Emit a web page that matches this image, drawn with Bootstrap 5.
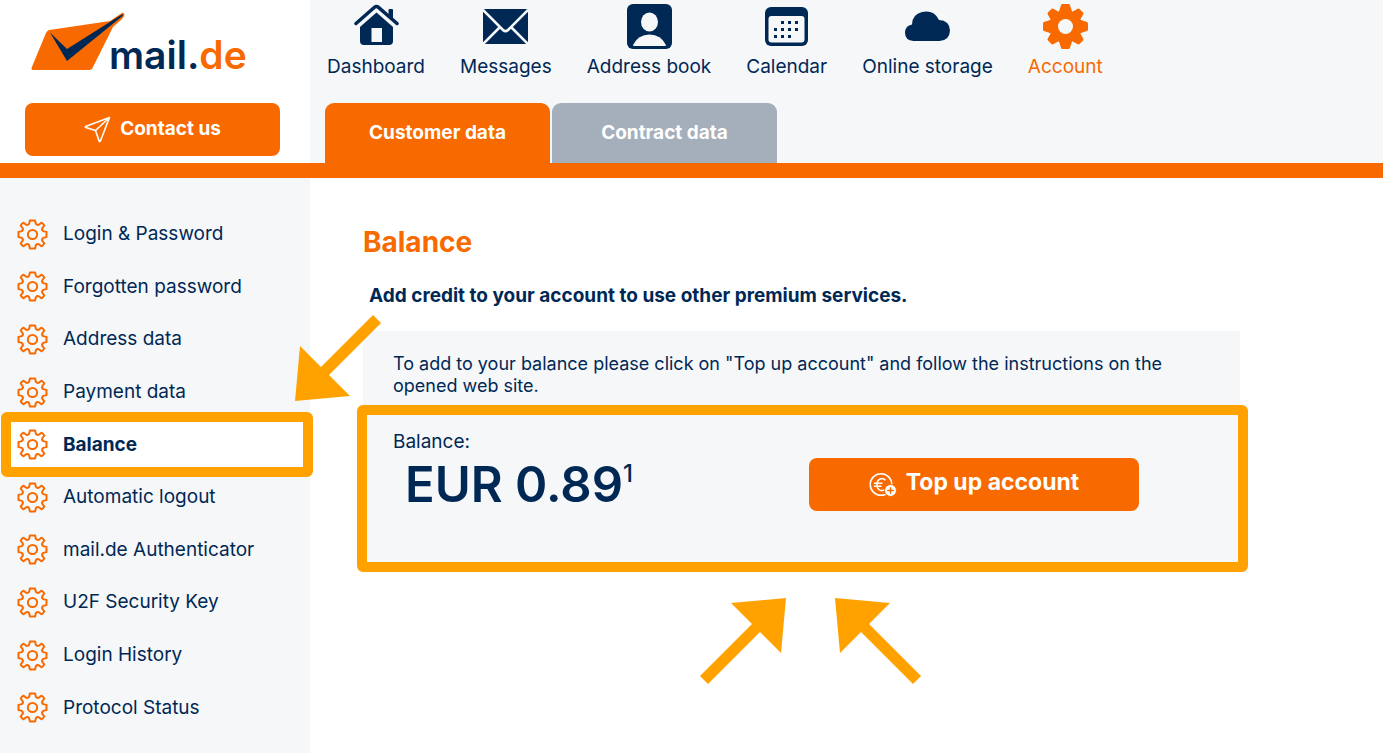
<!DOCTYPE html>
<html lang="en">
<head>
<meta charset="utf-8">
<meta name="viewport" content="width=device-width, initial-scale=1">
<title>mail.de – Balance</title>
<link href="https://cdn.jsdelivr.net/npm/bootstrap@5.3.0/dist/css/bootstrap.min.css" rel="stylesheet">
<style>
  :root { --navy: #002855; --brand: #f86a00; --pale: #f6f7f9; --mark: #ffa200; }
  body { font-family: Inter, "Open Sans", sans-serif; color: var(--navy); font-size: 19px; line-height: 24px; min-height: 100vh; }
  a { color: inherit; text-decoration: none; }
  .side-col { width: 310px; flex: none; }
  .pale { background: var(--pale); }
  .top-band { border-bottom: 15px solid var(--brand); }
  .brand-link { padding: 12px 0 0 31px; height: 103px; }
  .brand-word { font-size: 39px; line-height: 48px; font-weight: 600; margin: 19px 0 0 -16px; }
  .brand-word span, .text-brand { color: var(--brand); }
  .btn-brand { --bs-btn-color: #fff; --bs-btn-bg: var(--brand); --bs-btn-hover-bg: #e06000; --bs-btn-hover-color: #fff; --bs-btn-border-width: 0px; --bs-btn-border-radius: 8px; --bs-btn-font-weight: 700; height: 53px; }
  .contact-btn { width: 255px; margin: 0 0 7px 25px; --bs-btn-font-size: 19px; gap: 9px; }
  .app-nav { gap: 35px; padding: 4px 0 0 17px; height: 103px; }
  .app-nav svg { width: 45px; height: 45px; }
  .app-nav a { gap: 6px; }
  .tab-row { gap: 2px; padding-left: 15px; }
  .tab-link { width: 225px; height: 60px; border-radius: 9px 9px 0 0; background: #a5afbb; color: #fff; font-weight: 700; }
  .tab-link.active { background: var(--brand); }
  .side-list { height: 526px; margin-top: 30px; }
  .side-list a { padding-left: 17px; gap: 15px; }
  .side-list svg { width: 31px; height: 31px; }
  .marked { background: #fff; font-weight: 700; }
  .marked::after { content: ""; position: absolute; inset: -6px -3px -6px 1px; border: 10px solid var(--mark); border-radius: 6px; }
  .page-main { padding: 46px 24px 0 53px; }
  .page-main h1 { font-size: 28px; line-height: 36px; font-weight: 700; }
  .intro { font-weight: 700; padding: 24px 0 23px 6px; }
  .panel { max-width: 877px; }
  .panel-text { font-size: 18px; line-height: 22px; padding: 22px 30px 8px; }
  .balance-box { border: 10px solid var(--mark); border-radius: 6px; margin: 0 -8px 0 -6px; padding: 15px 99px 37px 26px; min-height: 167px; }
  .amount { font-size: 49px; line-height: 62px; font-weight: 600; padding-left: 12px; }
  .amount sup { font-size: 24px; font-weight: 500; top: -20px; line-height: 0; vertical-align: baseline; }
  .topup-btn { width: 330px; --bs-btn-font-size: 23px; gap: 9px; margin-top: 28px; padding-bottom: 10px; }
  .topup-btn svg { margin-top: 4px; }
  .arrow { width: 86px; height: 86px; fill: var(--mark); }
  .side-arrow { left: -15px; top: 137px; transform: scaleY(-1); }
  .flip { transform: scaleX(-1); }
  .arrow-row { gap: 49px; padding: 26px 0 0 18px; }
</style>
</head>
<body class="d-flex flex-column">
<svg class="d-none" aria-hidden="true">
  <symbol id="cog" viewBox="-15.500 -15.500 31 31">
    <path d="M-2.600-14H2.600L3.400-10.600Q5-8.700 7-10.300L8.900-11.800Q11-10.800 11.800-8.900L10.300-7Q8.700-5 10.600-3.400L14-2.600V2.600L10.600 3.400Q8.700 5 10.300 7L11.800 8.900Q10.800 11 8.900 11.800L7 10.300Q5 8.700 3.400 10.600L2.600 14H-2.600L-3.400 10.600Q-5 8.700-7 10.300L-8.900 11.800Q-11 10.800-11.800 8.900L-10.300 7Q-8.700 5-10.600 3.400L-14 2.600V-2.600L-10.600-3.400Q-8.700-5-10.300-7L-11.800-8.900Q-10.800-11-8.900-11.800L-7-10.300Q-5-8.700-3.400-10.600Z" fill="none" stroke="#f86a00" stroke-width="2" stroke-linejoin="round"/>
    <circle r="4.600" fill="none" stroke="#f86a00" stroke-width="2"/>
  </symbol>
  <symbol id="arrow" viewBox="0 0 86 86"><path d="M0 0L55 5L34 26L86 78L78 86L26 34L5 55Z"/></symbol>
</svg>

<header class="d-flex top-band">
  <div class="side-col">
    <a href="#" class="brand-link d-flex align-items-start" aria-label="mail.de">
      <svg width="94" height="60" viewBox="0 0 94 60">
        <path d="M17 18.500Q18 18 20 17.800L79 9L90 1.500Q93-.5 93.500 3Q93 5 91 7L82 15L62 55Q61 58 58 58H2Q0 58 .7 55.500L15 21Q16 19 17 18.500Z" fill="#f86a00"/>
        <path d="M19 20.500L36 37L90 3Q93 1 91.500 4L36 49Z" fill="#002855"/>
      </svg>
      <div class="brand-word">mail.<span>de</span></div>
    </a>
    <button type="button" class="btn btn-brand contact-btn d-flex align-items-center justify-content-center">
      <svg width="27" height="27" viewBox="0 0 27 27" fill="none" stroke="#fff" stroke-width="1.600" stroke-linejoin="round"><path d="M25.500 1.500L1.500 10.500Q1 11.200 1.800 11.600L11.500 14.500L15.200 25.300Q15.800 26 16.300 25.200ZM11.500 14.500L25.500 1.500"/></svg>
      Contact us
    </button>
  </div>
  <div class="flex-fill pale">
    <nav class="app-nav d-flex align-items-start" aria-label="Applications">
      <a href="#" class="d-flex flex-column align-items-center">
        <svg viewBox="0 0 45 45" fill="#002855"><path d="M22.500 8.500L39 23V37Q39 41 35 41H10Q6 41 6 37V23Z"/><path d="M2 20L20.500 4Q22.500 2.300 24.500 4L43 20" fill="none" stroke="#f6f7f9" stroke-width="7"/><path d="M2 19.500L20.500 3.300Q22.500 1.600 24.500 3.300L43 19.500" fill="none" stroke="#002855" stroke-width="3.500" stroke-linecap="round"/><path d="M34.500 12V6Q34.500 5 35.500 5H38Q39 5 39 6V15Z"/><path d="M17.500 24H28V38H17.500Z" fill="#f6f7f9"/></svg>
        Dashboard</a>
      <a href="#" class="d-flex flex-column align-items-center">
        <svg viewBox="0 0 45 45"><rect y="5" width="45" height="35" rx="2" fill="#002855"/><path d="M0 6L20 26Q22.500 28.300 25 26L45 6M0 40L17 23M45 40L28 23" fill="none" stroke="#f6f7f9" stroke-width="2.500"/></svg>
        Messages</a>
      <a href="#" class="d-flex flex-column align-items-center">
        <svg viewBox="0 0 45 45"><rect width="45" height="45" rx="6" fill="#002855"/><ellipse cx="22.500" cy="18" rx="8.500" ry="9.500" fill="#f6f7f9"/><path d="M6 41Q11 30.500 22.500 30.500Q34 30.500 39 41Q39 42 38 42H7Q6 42 6 41Z" fill="#f6f7f9"/></svg>
        Address book</a>
      <a href="#" class="d-flex flex-column align-items-center">
        <svg viewBox="0 0 45 45"><rect x="1" y="3" width="43" height="39" rx="6" fill="#002855"/><rect x="4.500" y="12" width="36" height="26.500" rx="3" fill="#f6f7f9"/><path d="M17 18.500h3m4 0h3m4 0h3M10 25.500h3m4 0h3m4 0h3m4 0h3M10 32.500h3m4 0h3m4 0h3" stroke="#002855" stroke-width="3" fill="none"/></svg>
        Calendar</a>
      <a href="#" class="d-flex flex-column align-items-center">
        <svg viewBox="0 0 45 45"><path d="M8.500 37Q0 36.500 0 28.800Q.3 21.500 7 20.500Q7 10.500 17 8Q29 5.500 34 16Q44.500 16.500 45 26.500Q44.500 36.500 34.500 37Z" fill="#002855"/></svg>
        Online storage</a>
      <a href="#" class="d-flex flex-column align-items-center text-brand">
        <svg viewBox="-22.500 -22.500 45 45" fill="#f86a00" stroke="#f86a00" stroke-width="3" stroke-linejoin="round"><path d="M-3-21H3L5.200-14.300Q6-13 8-13.700L13-16.500L16.500-13L13.700-8Q13-6 14.300-5.200L21-3V3L14.300 5.200Q13 6 13.700 8L16.500 13L13 16.500L8 13.700Q6 13 5.200 14.300L3 21H-3L-5.200 14.300Q-6 13-8 13.700L-13 16.500L-16.500 13L-13.700 8Q-13 6-14.300 5.200L-21 3V-3L-14.300-5.200Q-13-6-13.700-8L-16.500-13L-13-16.500L-8-13.700Q-6-13-5.200-14.300Z"/><circle r="7.500" fill="#f6f7f9" stroke="none"/></svg>
        Account</a>
    </nav>
    <nav class="tab-row d-flex" aria-label="Account sections">
      <a href="#" class="tab-link active d-flex align-items-center justify-content-center">Customer data</a>
      <a href="#" class="tab-link d-flex align-items-center justify-content-center">Contract data</a>
    </nav>
  </div>
</header>

<div class="d-flex flex-fill">
  <nav class="side-col pale" aria-label="Settings">
    <ul class="side-list list-unstyled d-flex flex-column mb-0">
      <li class="flex-fill d-flex"><a href="#" class="d-flex flex-fill align-items-center"><svg><use href="#cog"/></svg>Login &amp; Password</a></li>
      <li class="flex-fill d-flex"><a href="#" class="d-flex flex-fill align-items-center"><svg><use href="#cog"/></svg>Forgotten password</a></li>
      <li class="flex-fill d-flex"><a href="#" class="d-flex flex-fill align-items-center"><svg><use href="#cog"/></svg>Address data</a></li>
      <li class="flex-fill d-flex"><a href="#" class="d-flex flex-fill align-items-center"><svg><use href="#cog"/></svg>Payment data</a></li>
      <li class="flex-fill d-flex marked position-relative"><a href="#" class="d-flex flex-fill align-items-center" aria-current="page"><svg><use href="#cog"/></svg>Balance</a></li>
      <li class="flex-fill d-flex"><a href="#" class="d-flex flex-fill align-items-center"><svg><use href="#cog"/></svg>Automatic logout</a></li>
      <li class="flex-fill d-flex"><a href="#" class="d-flex flex-fill align-items-center"><svg><use href="#cog"/></svg>mail.de Authenticator</a></li>
      <li class="flex-fill d-flex"><a href="#" class="d-flex flex-fill align-items-center"><svg><use href="#cog"/></svg>U2F Security Key</a></li>
      <li class="flex-fill d-flex"><a href="#" class="d-flex flex-fill align-items-center"><svg><use href="#cog"/></svg>Login History</a></li>
      <li class="flex-fill d-flex"><a href="#" class="d-flex flex-fill align-items-center"><svg><use href="#cog"/></svg>Protocol Status</a></li>
    </ul>
  </nav>
  <main class="page-main flex-fill position-relative">
    <h1 class="text-brand mb-0">Balance</h1>
    <p class="intro mb-0">Add credit to your account to use other premium services.</p>
    <section class="panel pale">
      <p class="panel-text mb-0">To add to your balance please click on "Top up account" and follow the instructions on the opened web site.</p>
      <div class="balance-box d-flex justify-content-between align-items-start">
        <div>
          <div>Balance:</div>
          <div class="amount">EUR 0.89<sup>1</sup></div>
        </div>
        <button type="button" class="btn btn-brand topup-btn d-flex align-items-center justify-content-center">
          <svg width="28" height="26" viewBox="0 0 28 26" fill="none" stroke="#fff" stroke-width="1.500"><circle cx="12" cy="12.500" r="10.800"/><path d="M16.500 8.200C13.500 5.300 8 6.500 8 12.500C8 18.500 13 20 16 17.200M5 11.300H13.500M5 14.200H12.500"/><circle cx="21.500" cy="18.500" r="6" fill="#fff" stroke="#f86a00" stroke-width="1"/><path d="M21.500 15.200V21.800M18.200 18.500H24.800" stroke="#f86a00"/></svg>
          Top up account
        </button>
      </div>
    </section>
    <div class="panel arrow-row d-flex justify-content-center">
      <svg class="arrow flip"><use href="#arrow"/></svg>
      <svg class="arrow"><use href="#arrow"/></svg>
    </div>
    <svg class="arrow side-arrow position-absolute"><use href="#arrow"/></svg>
  </main>
</div>
<script src="https://cdn.jsdelivr.net/npm/bootstrap@5.3.0/dist/js/bootstrap.bundle.min.js"></script>
</body>
</html>
